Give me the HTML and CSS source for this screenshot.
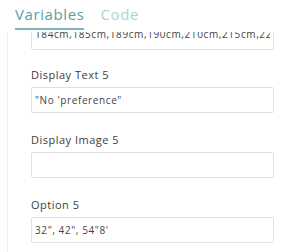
FILE: index.html
```html
<!DOCTYPE html>
<html lang="en">
<head>
<meta charset="UTF-8">
<title>Variables</title>
<link rel="stylesheet" href="styles.css">
</head>
<body>
    <div class="tabs">
        <div class="tab active">Variables</div>
        <div class="tab">Code</div>
    </div>
    <div class="panel">
        <div class="fields">
            <div class="field first">
                <input type="text" value="184cm,185cm,189cm,190cm,210cm,215cm,220cm">
            </div>
            <div class="field">
                <label>Display Text 5</label>
                <input type="text" value="&quot;No 'preference&quot;">
            </div>
            <div class="field">
                <label>Display Image 5</label>
                <input type="text" value="">
            </div>
            <div class="field">
                <label>Option 5</label>
                <input type="text" value="32&quot;, 42&quot;, 54&quot;8'">
            </div>
        </div>
    </div>
</body>
</html>
```

FILE: styles.css
```css
body {
    margin: 0;
    font-family: 'Open Sans', sans-serif;
    background: #fff;
    color: #444;
    width: 290px;
    height: 252px;
    overflow: hidden;
}
.tabs {
    display: flex;
    gap: 16px;
    height: 32px;
    padding-left: 15px;
    background: #fff;
}
.tab {
    font-size: 15px;
    line-height: 26px;
    padding-top: 1px;
    color: #a8d4d7;
    letter-spacing: 0.6px;
}
.tab.active {
    color: #5b9ea4;
    border-bottom: 2px solid #7fb6bb;
    height: 27px;
}
.panel {
    margin-left: 7px;
    border-left: 1px solid #eeeeee;
    height: 220px;
    overflow: hidden;
}
.fields {
    margin-top: -8px;
    padding-left: 23px;
}
.field {
    display: flex;
    flex-direction: column;
    margin-bottom: 20px;
}
.field.first {
    margin-bottom: 18px;
}
.field.first input {
    padding-bottom: 6px;
}
.field label {
    font-size: 11px;
    line-height: 14px;
    color: #3d3d3d;
    letter-spacing: 0.5px;
    margin-bottom: 5px;
}
.field input {
    width: 243px;
    height: 26px;
    box-sizing: border-box;
    border: 1px solid #e0e0e0;
    border-radius: 2px;
    padding: 0 3px;
    font-family: 'Open Sans', sans-serif;
    font-size: 10px;
    letter-spacing: 0.6px;
    color: #444;
    outline: none;
}
```
